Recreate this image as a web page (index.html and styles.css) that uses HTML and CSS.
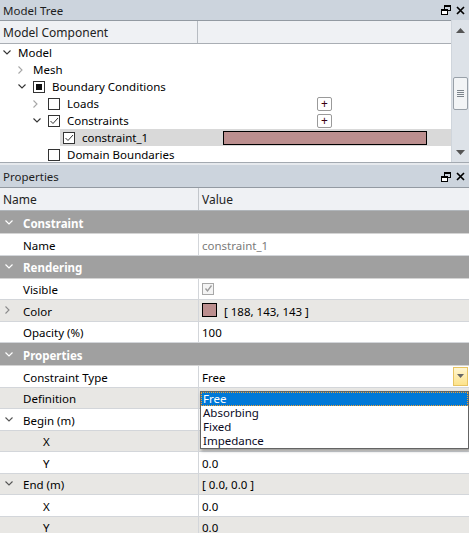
FILE: index.html
```html
<!DOCTYPE html>
<html lang="en">
<head>
    <meta charset="UTF-8">
    <title>Model Tree / Properties</title>
    <link rel="stylesheet" href="styles.css">
</head>
<body>
    <div class="dock">
        <div class="titlebar">
            <span>Model Tree</span>
            <span class="title-icons">
                <svg width="10" height="10" viewBox="0 0 10 10"><rect x="3.5" y="0.5" width="6" height="5" fill="none" stroke="#000"/><rect x="3.5" y="0.5" width="6" height="1.5" fill="#000"/><rect x="0.5" y="4.5" width="6" height="5" fill="#fff" stroke="#000"/><rect x="0.5" y="4.5" width="6" height="1.5" fill="#000"/></svg>
                <svg width="9" height="9" viewBox="0 0 9 9"><path d="M1 1 L8 8 M8 1 L1 8" stroke="#000" stroke-width="1.7"/></svg>
            </span>
        </div>
        <div class="tree-body">
            <div class="tree-main">
                <div class="tree-head">
                    <div class="th">Model Component</div>
                    <div class="th"></div>
                </div>
                <div class="tree-rows">
                    <div class="node" style="--lvl: 0">
                        <div class="node-name">
                            <span class="exp"><svg width="8" height="5" viewBox="0 0 8 5"><path d="M0.5 0.5 L4 4 L7.5 0.5" fill="none" stroke="#333" stroke-width="1.1"/></svg></span>
                            <span class="label">Model</span>
                        </div>
                        <div class="node-extra"></div>
                    </div>
                    <div class="node" style="--lvl: 1">
                        <div class="node-name">
                            <span class="exp"><svg width="5" height="8" viewBox="0 0 5 8"><path d="M0.5 0.5 L4 4 L0.5 7.5" fill="none" stroke="#a6a6a6" stroke-width="1.1"/></svg></span>
                            <span class="label">Mesh</span>
                        </div>
                        <div class="node-extra"></div>
                    </div>
                    <div class="node" style="--lvl: 1">
                        <div class="node-name">
                            <span class="exp"><svg width="8" height="5" viewBox="0 0 8 5"><path d="M0.5 0.5 L4 4 L7.5 0.5" fill="none" stroke="#333" stroke-width="1.1"/></svg></span>
                            <span class="item"><span class="check partial"></span><span class="label">Boundary Conditions</span></span>
                        </div>
                        <div class="node-extra"></div>
                    </div>
                    <div class="node" style="--lvl: 2">
                        <div class="node-name">
                            <span class="exp"><svg width="5" height="8" viewBox="0 0 5 8"><path d="M0.5 0.5 L4 4 L0.5 7.5" fill="none" stroke="#a6a6a6" stroke-width="1.1"/></svg></span>
                            <span class="item"><span class="check"></span><span class="label">Loads</span></span>
                        </div>
                        <div class="node-extra"><span class="add-btn">+</span></div>
                    </div>
                    <div class="node" style="--lvl: 2">
                        <div class="node-name">
                            <span class="exp"><svg width="8" height="5" viewBox="0 0 8 5"><path d="M0.5 0.5 L4 4 L7.5 0.5" fill="none" stroke="#333" stroke-width="1.1"/></svg></span>
                            <span class="item"><span class="check"><svg width="10" height="10" viewBox="0 0 10 10"><path d="M1.5 5 L4 7.5 L9 2" fill="none" stroke="#333" stroke-width="1"/></svg></span><span class="label">Constraints</span></span>
                        </div>
                        <div class="node-extra"><span class="add-btn">+</span></div>
                    </div>
                    <div class="node selected" style="--lvl: 3">
                        <div class="node-name">
                            <span class="exp"></span>
                            <span class="item"><span class="check"><svg width="10" height="10" viewBox="0 0 10 10"><path d="M1.5 5 L4 7.5 L9 2" fill="none" stroke="#333" stroke-width="1"/></svg></span><span class="label">constraint_1</span></span>
                        </div>
                        <div class="node-extra"><span class="color-bar"></span></div>
                    </div>
                    <div class="node" style="--lvl: 2">
                        <div class="node-name">
                            <span class="exp"></span>
                            <span class="item"><span class="check"></span><span class="label">Domain Boundaries</span></span>
                        </div>
                        <div class="node-extra"></div>
                    </div>
                </div>
            </div>
            <div class="vscroll">
                <svg class="arrow" width="9" height="5" viewBox="0 0 9 5"><path d="M0 5 L4.5 0 L9 5 Z" fill="#555"/></svg>
                <div class="track">
                    <div class="thumb"><span></span><span></span><span></span><span></span></div>
                </div>
                <svg class="arrow" width="9" height="5" viewBox="0 0 9 5"><path d="M0 0 L4.5 5 L9 0 Z" fill="#555"/></svg>
            </div>
        </div>
    </div>

    <div class="splitter"></div>

    <div class="dock props">
        <div class="titlebar">
            <span>Properties</span>
            <span class="title-icons">
                <svg width="10" height="10" viewBox="0 0 10 10"><rect x="3.5" y="0.5" width="6" height="5" fill="none" stroke="#000"/><rect x="3.5" y="0.5" width="6" height="1.5" fill="#000"/><rect x="0.5" y="4.5" width="6" height="5" fill="#fff" stroke="#000"/><rect x="0.5" y="4.5" width="6" height="1.5" fill="#000"/></svg>
                <svg width="9" height="9" viewBox="0 0 9 9"><path d="M1 1 L8 8 M8 1 L1 8" stroke="#000" stroke-width="1.7"/></svg>
            </span>
        </div>
        <div class="prop-head">
            <div class="ph">Name</div>
            <div class="ph">Value</div>
        </div>

        <div class="category">
            <span class="exp"><svg width="8" height="5" viewBox="0 0 8 5"><path d="M0.5 0.5 L4 4 L7.5 0.5" fill="none" stroke="#fff" stroke-width="1.2"/></svg></span>Constraint
        </div>
        <div class="prop-row">
            <div class="pname"><span class="exp"></span>Name</div>
            <div class="pvalue readonly">constraint_1</div>
        </div>

        <div class="category">
            <span class="exp"><svg width="8" height="5" viewBox="0 0 8 5"><path d="M0.5 0.5 L4 4 L7.5 0.5" fill="none" stroke="#fff" stroke-width="1.2"/></svg></span>Rendering
        </div>
        <div class="prop-row">
            <div class="pname"><span class="exp"></span>Visible</div>
            <div class="pvalue"><span class="check disabled"><svg width="9" height="9" viewBox="0 0 9 9"><path d="M1.5 4.5 L3.5 7 L7.5 1.5" fill="none" stroke="#9a9a9a" stroke-width="1.3"/></svg></span></div>
        </div>
        <div class="prop-row alt">
            <div class="pname"><span class="exp"><svg width="5" height="8" viewBox="0 0 5 8"><path d="M0.5 0.5 L4 4 L0.5 7.5" fill="none" stroke="#8a8a8a" stroke-width="1.1"/></svg></span>Color</div>
            <div class="pvalue"><span class="swatch"></span>[ 188, 143, 143 ]</div>
        </div>
        <div class="prop-row">
            <div class="pname"><span class="exp"></span>Opacity (%)</div>
            <div class="pvalue">100</div>
        </div>

        <div class="category">
            <span class="exp"><svg width="8" height="5" viewBox="0 0 8 5"><path d="M0.5 0.5 L4 4 L7.5 0.5" fill="none" stroke="#fff" stroke-width="1.2"/></svg></span>Properties
        </div>
        <div class="prop-row">
            <div class="pname"><span class="exp"></span>Constraint Type</div>
            <div class="pvalue combo">
                <span>Free</span>
                <span class="combo-btn"><svg width="7" height="4" viewBox="0 0 7 4"><path d="M0 0 L3.5 4 L7 0 Z" fill="#666"/></svg></span>
            </div>
        </div>
        <div class="prop-row alt">
            <div class="pname"><span class="exp"></span>Definition</div>
            <div class="pvalue"></div>
        </div>
        <div class="prop-row">
            <div class="pname"><span class="exp"><svg width="8" height="5" viewBox="0 0 8 5"><path d="M0.5 0.5 L4 4 L7.5 0.5" fill="none" stroke="#555" stroke-width="1.1"/></svg></span>Begin (m)</div>
            <div class="pvalue"></div>
        </div>
        <div class="prop-row alt">
            <div class="pname sub"><span class="exp"></span>X</div>
            <div class="pvalue"></div>
        </div>
        <div class="prop-row">
            <div class="pname sub"><span class="exp"></span>Y</div>
            <div class="pvalue">0.0</div>
        </div>
        <div class="prop-row alt">
            <div class="pname"><span class="exp"><svg width="8" height="5" viewBox="0 0 8 5"><path d="M0.5 0.5 L4 4 L7.5 0.5" fill="none" stroke="#555" stroke-width="1.1"/></svg></span>End (m)</div>
            <div class="pvalue">[ 0.0, 0.0 ]</div>
        </div>
        <div class="prop-row">
            <div class="pname sub"><span class="exp"></span>X</div>
            <div class="pvalue">0.0</div>
        </div>
        <div class="prop-row alt">
            <div class="pname sub"><span class="exp"></span>Y</div>
            <div class="pvalue">0.0</div>
        </div>

        <ul class="dropdown">
            <li class="current">Free</li>
            <li>Absorbing</li>
            <li>Fixed</li>
            <li>Impedance</li>
        </ul>
    </div>
</body>
</html>
```

FILE: styles.css
```css
body {
    margin: 0;
    padding: 0;
    width: 469px;
    height: 533px;
    overflow: hidden;
    font-family: "Noto Sans", "Open Sans", sans-serif;
    font-size: 11.5px;
    color: #000;
    background-color: #e6e9ed;
}
.titlebar {
    height: 20px;
    display: flex;
    align-items: center;
    justify-content: space-between;
    padding: 0 4px 0 3px;
    background-color: #ccd4dd;
    border-bottom: 1px solid #939aa2;
    color: #1e1e1e;
}
.title-icons {
    display: flex;
    align-items: center;
    gap: 5px;
}

/* model tree */
.tree-body {
    display: flex;
    height: 141px;
    border-bottom: 1px solid #a3a9b0;
    background-color: #fff;
}
.tree-main {
    flex: 1;
    display: flex;
    flex-direction: column;
}
.tree-head {
    display: grid;
    grid-template-columns: 198px 1fr;
    height: 22px;
    background-color: #eff1f4;
    border-bottom: 1px solid #a9aeb4;
}
.th {
    display: flex;
    align-items: center;
    padding-left: 3px;
    padding-top: 1px;
    font-size: 12px;
    color: #222;
}
.th:first-child {
    border-right: 1px solid #b7bcc2;
}
.tree-rows {
    flex: 1;
    overflow: hidden;
}
.node {
    display: grid;
    grid-template-columns: 198px 1fr;
    height: 17px;
}
.node-name {
    display: flex;
    align-items: center;
    padding-left: calc(var(--lvl) * 15px + 3px);
}
.exp {
    width: 15px;
    flex: none;
    display: flex;
    align-items: center;
}
.item {
    display: flex;
    align-items: center;
    height: 100%;
    flex: 1;
}
.check {
    width: 10px;
    height: 10px;
    border: 1px solid #333;
    background-color: #fff;
    margin-right: 7px;
    display: flex;
    align-items: center;
    justify-content: center;
    flex: none;
}
.check.partial::after {
    content: "";
    width: 6px;
    height: 6px;
    background-color: #111;
}
.node-extra {
    display: flex;
    align-items: center;
    justify-content: center;
}
.add-btn {
    width: 13px;
    height: 12px;
    border: 1px solid #9a9a9a;
    border-radius: 2px;
    background-color: #fff;
    font-size: 12px;
    line-height: 11px;
    text-align: center;
    color: #3a0010;
}
.node.selected .item {
    margin-left: -3px;
    padding-left: 3px;
    background-color: #d9d9d9;
}
.node.selected .node-extra {
    background-color: #d9d9d9;
}
.color-bar {
    width: 202px;
    height: 12px;
    border: 1px solid #000;
    background-color: #bc8f8f;
}

.vscroll {
    width: 17px;
    margin-top: -1px;
    display: flex;
    flex-direction: column;
    align-items: center;
    background-color: #dde2e8;
    border-left: 1px solid #cfd5dc;
}
.vscroll .arrow {
    margin: 8px 0 7px;
}
.track {
    flex: 1;
    width: 100%;
}
.thumb {
    margin: 37px 1px 0 1px;
    height: 31px;
    border: 1px solid #98a0a8;
    border-radius: 2px;
    background-color: #f2f4f6;
    display: flex;
    flex-direction: column;
    align-items: center;
    justify-content: center;
    gap: 1px;
}
.thumb span {
    width: 7px;
    height: 1px;
    background-color: #7c848c;
}

.splitter {
    height: 2px;
}

/* properties */
.props {
    position: relative;
    background-color: #fff;
}
.props .titlebar {
    height: 22px;
    padding-top: 1px;
    box-sizing: border-box;
    height: 23px;
}
.prop-head {
    display: grid;
    grid-template-columns: 199px 1fr;
    height: 22px;
    background-color: #eff1f4;
    border-bottom: 1px solid #b0b5ba;
}
.ph {
    display: flex;
    align-items: center;
    padding-left: 3px;
    padding-top: 1px;
    font-size: 12px;
    color: #222;
}
.ph:first-child {
    border-right: 1px solid #c2c6cb;
}
.category {
    height: 23px;
    box-sizing: border-box;
    display: flex;
    align-items: center;
    padding: 2px 0 0 5px;
    background-color: #a0a0a0;
    border-bottom: 1px solid #d4d4d4;
    color: #fff;
    font-weight: bold;
}
.category .exp {
    width: 18px;
    margin-top: -2px;
}
.prop-row {
    display: grid;
    grid-template-columns: 199px 1fr;
    height: 21.5px;
    box-sizing: border-box;
    border-bottom: 1px solid #d3d6da;
}
.prop-row.alt {
    background-color: #e8e7e4;
}
.pname {
    display: flex;
    align-items: center;
    padding: 2px 0 0 5px;
    border-right: 1px solid #d3d6da;
}
.pname .exp {
    width: 18px;
    margin-top: -2px;
}
.pname.sub {
    padding-left: 25px;
}
.pvalue {
    display: flex;
    align-items: center;
    padding: 2px 0 0 3px;
}
.pvalue.readonly {
    color: #7a7a7a;
}
.check.disabled {
    border-color: #a8a8a8;
    background-color: #f4f4f4;
    margin: -2px 0 0 0;
}
.swatch {
    width: 13px;
    height: 12px;
    border: 1px solid #000;
    background-color: #bc8f8f;
    margin: -2px 7px 0 0;
}
.combo {
    justify-content: space-between;
    padding: 0 1px 0 3px;
    background-color: #fff;
}
.combo > span:first-child {
    padding-top: 2px;
}
.combo-btn {
    width: 15px;
    height: 19px;
    box-sizing: border-box;
    border: 1px solid #e8c462;
    background: linear-gradient(#fff6d2, #fde38b);
    display: flex;
    align-items: center;
    justify-content: center;
}
.dropdown {
    position: absolute;
    left: 200px;
    top: 226px;
    width: 269px;
    box-sizing: border-box;
    margin: 0;
    padding: 0;
    list-style: none;
    background-color: #fff;
    border: 1px solid #646464;
    box-shadow: 1px 2px 3px rgba(0, 0, 0, 0.35);
}
.dropdown li {
    height: 14px;
    line-height: 14px;
    padding-left: 2px;
    color: #0a0a1e;
}
.dropdown li.current {
    background-color: #0078d7;
    color: #fff;
    outline: 1px dotted #f0a030;
    outline-offset: -1px;
}
```
